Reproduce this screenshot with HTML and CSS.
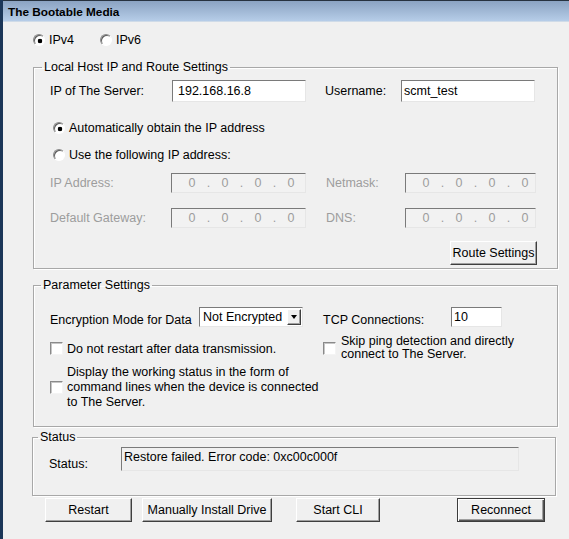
FILE: index.html
```html
<!DOCTYPE html>
<html>
<head>
    <title>The Bootable Media</title>
    <link rel="stylesheet" href="styles.css">
</head>
<body>
    <div class="window">
        <div class="titlebar">The Bootable Media</div>

        <div class="proto-row">
            <div class="opt opt-v4"><span class="radio checked"></span>IPv4</div>
            <div class="opt"><span class="radio"></span>IPv6</div>
        </div>

        <fieldset class="group group-host">
            <legend>Local Host IP and Route Settings</legend>
            <div class="row row-server">
                <span class="lbl lbl-server">IP of The Server:</span>
                <span class="field field-server">192.168.16.8</span>
                <span class="lbl lbl-user">Username:</span>
                <span class="field field-user">scmt_test</span>
            </div>
            <div class="radio-row radio-auto"><span class="radio checked"></span>Automatically obtain the IP address</div>
            <div class="radio-row radio-manual"><span class="radio"></span>Use the following IP address:</div>
            <div class="row ip-row ip-first">
                <span class="lbl lbl-ip disabled">IP Address:</span>
                <span class="ipfield ipfield-left">
                    <span class="oct">0</span><span class="dot">.</span><span class="oct">0</span><span class="dot">.</span><span class="oct">0</span><span class="dot">.</span><span class="oct">0</span>
                </span>
                <span class="lbl lbl-mask disabled">Netmask:</span>
                <span class="ipfield ipfield-right">
                    <span class="oct">0</span><span class="dot">.</span><span class="oct">0</span><span class="dot">.</span><span class="oct">0</span><span class="dot">.</span><span class="oct">0</span>
                </span>
            </div>
            <div class="row ip-row ip-second">
                <span class="lbl lbl-ip disabled">Default Gateway:</span>
                <span class="ipfield ipfield-left">
                    <span class="oct">0</span><span class="dot">.</span><span class="oct">0</span><span class="dot">.</span><span class="oct">0</span><span class="dot">.</span><span class="oct">0</span>
                </span>
                <span class="lbl lbl-mask disabled">DNS:</span>
                <span class="ipfield ipfield-right">
                    <span class="oct">0</span><span class="dot">.</span><span class="oct">0</span><span class="dot">.</span><span class="oct">0</span><span class="dot">.</span><span class="oct">0</span>
                </span>
            </div>
            <div class="route-row">
                <button class="btn btn-route">Route Settings</button>
            </div>
        </fieldset>

        <fieldset class="group group-params">
            <legend>Parameter Settings</legend>
            <div class="params">
                <div class="col col-left">
                    <div class="row row-enc">
                        <span class="lbl lbl-enc">Encryption Mode for Data</span>
                        <span class="select">
                            <span class="select-text">Not Encrypted</span>
                            <span class="drop"><span class="arrow"></span></span>
                        </span>
                    </div>
                    <div class="check-row check-restart">
                        <span class="checkbox"></span>
                        <span>Do not restart after data transmission.</span>
                    </div>
                    <div class="check-row check-display">
                        <span class="checkbox"></span>
                        <span class="multi">Display the working status in the form of<br>command lines when the device is connected<br>to The Server.</span>
                    </div>
                </div>
                <div class="col col-right">
                    <div class="row row-tcp">
                        <span class="lbl lbl-tcp">TCP Connections:</span>
                        <span class="field field-tcp">10</span>
                    </div>
                    <div class="check-row check-skip">
                        <span class="checkbox"></span>
                        <span class="multi tight">Skip ping detection and directly<br>connect to The Server.</span>
                    </div>
                </div>
            </div>
        </fieldset>

        <fieldset class="group group-status">
            <legend>Status</legend>
            <div class="row row-status">
                <span class="lbl lbl-status">Status:</span>
                <span class="field field-status">Restore failed. Error code: 0xc00c000f</span>
            </div>
        </fieldset>

        <div class="button-row">
            <button class="btn btn-restart">Restart</button>
            <button class="btn btn-drive">Manually Install Drive</button>
            <button class="btn btn-cli">Start CLI</button>
            <button class="btn btn-default btn-reconnect">Reconnect</button>
        </div>
    </div>
</body>
</html>
```

FILE: styles.css
```css
body {
    margin: 0;
    background: #f0f0f0;
    font-family: "Liberation Sans", Arial, sans-serif;
    font-size: 12.5px;
    color: #000;
}
.window {
    height: 539px;
    box-sizing: border-box;
    border-left: 3px solid #1b3658;
    overflow: hidden;
}

/* title bar */
.titlebar {
    height: 20px;
    line-height: 22px;
    padding-left: 5px;
    border-top: 1px solid #27323f;
    border-bottom: 1px solid #cfdbe8;
    background: linear-gradient(#8ba3c2, #b6cde8);
    font-weight: bold;
    font-size: 11.8px;
}

/* IPv4 / IPv6 */
.proto-row {
    display: flex;
    align-items: center;
    height: 14px;
    margin-top: 11px;
    padding-left: 30px;
}
.opt {
    display: flex;
    align-items: center;
    gap: 4px;
}
.opt-v4 {
    width: 67px;
}

/* classic controls */
.radio {
    width: 12px;
    height: 12px;
    box-sizing: border-box;
    border-radius: 50%;
    border: 1px solid;
    border-color: #8a8a8a #ffffff #ffffff #8a8a8a;
    box-shadow: inset 1px 1px 0 #5c5c5c;
    background: #fff;
    flex: none;
}
.radio.checked {
    background: radial-gradient(circle at 6px 6px, #000 0, #000 2px, #fff 2.6px);
}
.checkbox {
    width: 13px;
    height: 13px;
    box-sizing: border-box;
    border: 1px solid;
    border-color: #8a8a8a #f4f4f4 #f4f4f4 #8a8a8a;
    box-shadow: inset 1px 1px 0 #c6c6c6;
    background: #fff;
    flex: none;
}
.field {
    box-sizing: border-box;
    height: 22px;
    line-height: 20px;
    padding-left: 3px;
    background: #fff;
    border: 1px solid;
    border-color: #7a7a7a #e6e6e6 #e6e6e6 #7a7a7a;
    white-space: nowrap;
}
.btn {
    height: 24px;
    box-sizing: border-box;
    padding: 0;
    font: inherit;
    color: #000;
    background: #f0f0f0;
    border: 1px solid;
    border-color: #ffffff #3f3f3f #3f3f3f #ffffff;
    box-shadow: inset -1px -1px 0 #a0a0a0;
    flex: none;
}
.btn-default {
    border: 1px solid #3c3c3c;
    box-shadow: inset 1px 1px 0 #fff, inset -1px -1px 0 #555, inset -2px -2px 0 #a0a0a0;
}

/* group boxes */
.group {
    margin: 13px 11px 0 30px;
    padding: 0 20px 0 7px;
    border: 1px solid #a8a8a8;
    box-shadow: inset 1px 1px 0 #fff, 1px 1px 0 #fff;
    min-width: 0;
}
.group legend {
    padding: 0 2px;
    line-height: 14px;
}
.group-host legend {
    margin-left: 1px;
}
.group-params {
    margin-top: 9px;
    padding-bottom: 16px;
}
.group-status {
    margin: 3px 13px 0 29px;
    padding: 0 10px 24px 5px;
}

.row {
    display: flex;
    align-items: center;
}
.lbl {
    flex: none;
    white-space: nowrap;
}
.disabled {
    color: #9d9d9d;
}

/* local host box */
.row-server {
    margin-top: 6px;
    padding-left: 9px;
}
.lbl-server {
    width: 122px;
}
.field-server {
    width: 134px;
    padding-left: 5px;
}
.lbl-user {
    width: 76px;
    margin-left: 19px;
}
.field-user {
    width: 134px;
    padding-left: 2px;
}
.radio-row {
    display: flex;
    align-items: center;
    gap: 4px;
    height: 14px;
    padding-left: 12px;
}
.radio-auto {
    margin-top: 19px;
}
.radio-manual {
    margin-top: 13px;
}
.ip-row {
    padding-left: 9px;
}
.ip-first {
    margin-top: 11px;
}
.ip-second {
    margin-top: 15px;
}
.lbl-ip {
    width: 121px;
}
.lbl-mask {
    width: 79px;
    margin-left: 20px;
}
.ipfield {
    display: flex;
    box-sizing: border-box;
    height: 20px;
    line-height: 18px;
    padding-left: 12px;
    background: #f2f2f2;
    border: 1px solid;
    border-color: #7a7a7a #e6e6e6 #e6e6e6 #7a7a7a;
    color: #9d9d9d;
}
.ipfield-left {
    width: 135px;
}
.ipfield-right {
    width: 131px;
}
.oct {
    width: 16px;
    text-align: center;
}
.dot {
    width: 17px;
    text-align: center;
}
.route-row {
    display: flex;
    justify-content: flex-end;
    margin-top: 13px;
    padding-bottom: 3px;
}
.btn-route {
    width: 87px;
}

/* parameter box */
.params {
    display: flex;
    margin-top: 15px;
    padding-left: 9px;
}
.col-left {
    width: 273px;
}
.row-enc,
.row-tcp {
    align-items: flex-end;
    height: 20px;
}
.row-enc .lbl,
.row-tcp .lbl {
    line-height: 14px;
}
.lbl-enc {
    width: 149px;
}
.select {
    display: flex;
    align-items: center;
    justify-content: space-between;
    box-sizing: border-box;
    width: 104px;
    height: 20px;
    padding: 1px;
    background: #fff;
    border: 1px solid;
    border-color: #7a7a7a #e6e6e6 #e6e6e6 #7a7a7a;
}
.select-text {
    padding-left: 2px;
    white-space: nowrap;
}
.drop {
    display: flex;
    align-items: center;
    justify-content: center;
    box-sizing: border-box;
    width: 14px;
    height: 16px;
    background: #f0f0f0;
    border: 1px solid;
    border-color: #ffffff #404040 #404040 #ffffff;
    box-shadow: inset -1px -1px 0 #a0a0a0;
}
.arrow {
    width: 0;
    height: 0;
    border-left: 3.5px solid transparent;
    border-right: 3.5px solid transparent;
    border-top: 4px solid #000;
}
.lbl-tcp {
    width: 128px;
}
.field-tcp {
    width: 51px;
    height: 20px;
    line-height: 18px;
    padding-left: 2px;
}
.check-row {
    display: flex;
    align-items: center;
    gap: 4px;
    white-space: nowrap;
}
.check-restart {
    height: 13px;
    margin-top: 15px;
}
.check-display {
    margin-top: 10px;
}
.multi {
    line-height: 15px;
}
.multi.tight {
    line-height: 13px;
}
.check-skip {
    margin-top: 8px;
    gap: 5px;
}

/* status box */
.row-status {
    align-items: flex-end;
    margin-top: 3px;
    padding-left: 11px;
}
.lbl-status {
    width: 72px;
    line-height: 14px;
}
.field-status {
    width: 398px;
    height: 24px;
    line-height: 18px;
    padding-left: 2px;
    background: #f0f0f0;
}

/* bottom buttons */
.button-row {
    display: flex;
    margin-top: 2px;
    padding-left: 42px;
}
.btn-restart {
    width: 87px;
}
.btn-drive {
    width: 130px;
    margin-left: 10px;
}
.btn-cli {
    width: 84px;
    margin-left: 24px;
}
.btn-reconnect {
    width: 88px;
    margin-left: 77px;
}
```
